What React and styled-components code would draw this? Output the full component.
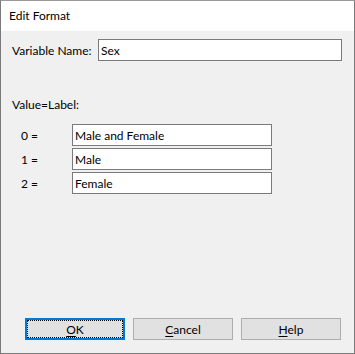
import React from "react";
import styled, { createGlobalStyle } from "styled-components";

const Global = createGlobalStyle`
  html, body { margin: 0; padding: 0; background: #ffffff; }
  body { font-family: Lato, "Noto Sans", sans-serif; font-size: 12px; color: #000; }
  * { box-sizing: border-box; }
`;

const Window = styled.div`
  width: 355px;
  height: 354px;
  display: flex;
  flex-direction: column;
  border: 1px solid #7a7a7a;
  border-top-color: #9a9a9a;
  background: #f0f0f0;
`;

const TitleBar = styled.div`
  height: 30px;
  flex: none;
  background: #ffffff;
  display: flex;
  align-items: center;
  padding-left: 8px;
  padding-bottom: 1px;
  font-size: 12px;
`;

const Body = styled.div`
  flex: 1;
  display: flex;
  flex-direction: column;
  padding: 8px 12px 13px 11px;
`;

const FieldRow = styled.div`
  display: flex;
  align-items: center;
  height: 22px;
`;

const Label = styled.span`
  width: ${(p) => p.$w}px;
  padding-left: ${(p) => p.$indent || 0}px;
  flex: none;
  white-space: nowrap;
`;

const TextBox = styled.div`
  width: ${(p) => p.$w}px;
  height: 22px;
  flex: none;
  background: #ffffff;
  border: 1px solid #7a7a7a;
  display: flex;
  align-items: center;
  padding-left: 2px;
  white-space: nowrap;
  overflow: hidden;
`;

const SectionLabel = styled.div`
  margin-top: 36px;
  height: 16px;
  line-height: 16px;
`;

const ValueList = styled.div`
  margin-top: 11px;
  display: flex;
  flex-direction: column;
  gap: 2px;
`;

const Spacer = styled.div`
  flex: 1;
`;

const ButtonBar = styled.div`
  display: flex;
  gap: 8px;
  padding-left: 13px;
`;

const Button = styled.div`
  position: relative;
  width: 100px;
  height: 22px;
  background: #e1e1e1;
  border: ${(p) => (p.$default ? "2px solid #0078d7" : "1px solid #adadad")};
  display: flex;
  align-items: center;
  justify-content: center;
  padding-top: 1px;
  font-size: 12px;
  &::after {
    content: "";
    display: ${(p) => (p.$default ? "block" : "none")};
    position: absolute;
    inset: 0;
    border: 1px dotted #000;
  }
`;

const Mnemonic = styled.span`
  text-decoration: underline;
  text-underline-offset: 2px;
`;

const rows = [
  { v: 0, label: "Male and Female" },
  { v: 1, label: "Male" },
  { v: 2, label: "Female" },
];

export default function App() {
  return (
    <>
      <Global />
      <Window>
        <TitleBar>Edit Format</TitleBar>
        <Body>
          <FieldRow>
            <Label $w={86}>Variable Name:</Label>
            <TextBox $w={244}>Sex</TextBox>
          </FieldRow>
          <SectionLabel>Value=Label:</SectionLabel>
          <ValueList>
            {rows.map((r) => (
              <FieldRow key={r.v}>
                <Label $w={60} $indent={9}>{r.v} =</Label>
                <TextBox $w={200}>{r.label}</TextBox>
              </FieldRow>
            ))}
          </ValueList>
          <Spacer />
          <ButtonBar>
            <Button $default>
              <span><Mnemonic>O</Mnemonic>K</span>
            </Button>
            <Button>
              <span><Mnemonic>C</Mnemonic>ancel</span>
            </Button>
            <Button>
              <span><Mnemonic>H</Mnemonic>elp</span>
            </Button>
          </ButtonBar>
        </Body>
      </Window>
    </>
  );
}
